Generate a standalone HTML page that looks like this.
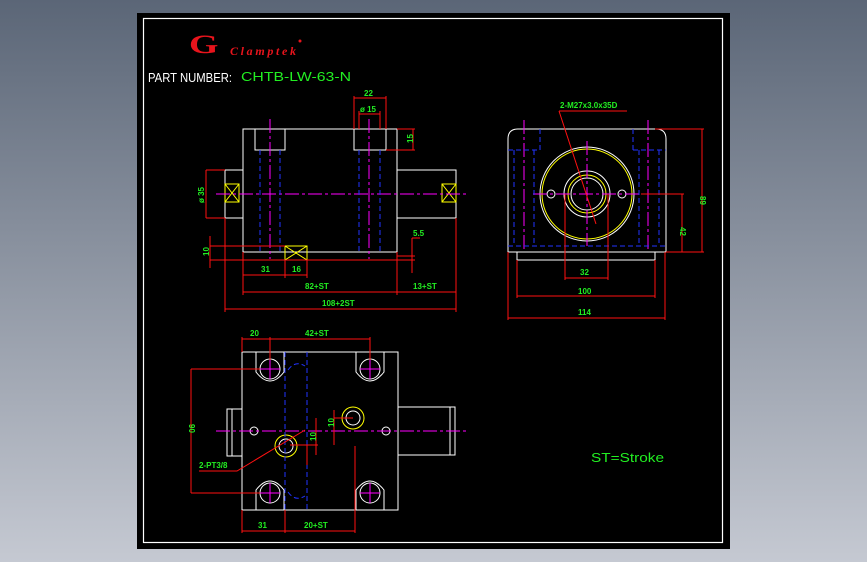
<!DOCTYPE html>
<html><head><meta charset="utf-8"><style>
html,body{margin:0;padding:0;width:867px;height:562px;overflow:hidden;background:linear-gradient(#5b6677,#c5c9d2);}
svg{position:absolute;left:0;top:0}
text{font-family:"Liberation Sans",sans-serif;}
.g{fill:#22ee22;font-size:8px;font-weight:bold;}
</style></head><body>
<svg width="867" height="562" viewBox="0 0 867 562">
<rect x="137" y="13" width="593" height="536" fill="#000"/>
<rect x="143.5" y="18.5" width="579" height="524" fill="none" stroke="#fff" stroke-width="1.2"/>
<!-- logo -->
<text x="0" y="0" fill="#e8141c" style="font-family:'Liberation Serif',serif;font-weight:bold;font-size:28px" transform="translate(189,53) scale(1.35,0.95)">G</text>
<text x="230" y="55" fill="#e8141c" style="font-family:'Liberation Serif',serif;font-style:italic;font-weight:bold;font-size:12px" textLength="66" lengthAdjust="spacing">Clamptek</text>
<circle cx="300" cy="41" r="1.5" fill="#e8141c"/>
<text x="148" y="82" fill="#fff" font-size="13" textLength="84" lengthAdjust="spacingAndGlyphs">PART NUMBER:</text>
<text x="241" y="81" fill="#22ee22" font-size="13" textLength="110" lengthAdjust="spacingAndGlyphs">CHTB-LW-63-N</text>
<text x="591" y="462" fill="#22ee22" font-size="13" textLength="73" lengthAdjust="spacingAndGlyphs">ST=Stroke</text>

<g fill="none" stroke-width="1">
<!-- FRONT VIEW -->
<g stroke="#fff">
<rect x="243" y="129" width="154" height="123"/>
<rect x="255" y="129" width="30" height="21"/>
<rect x="354" y="129" width="32" height="21"/>
<rect x="225" y="170" width="18" height="48"/>
<rect x="397" y="170" width="59" height="48"/>
</g>
<g stroke="#ffff00">
<rect x="225" y="184" width="14" height="18"/><path d="M225 184L239 202M239 184L225 202"/>
<rect x="442" y="184" width="14" height="18"/><path d="M442 184L456 202M456 184L442 202"/>
<rect x="285" y="246" width="22" height="14"/><path d="M285 246L307 260M307 246L285 260"/>
</g>
<g stroke="#ff00ff" stroke-dasharray="14,3,3,3">
<path d="M216 194H467M270 119V259M369 119V259"/>
</g>
<g stroke="#2233ff" stroke-dasharray="5,3">
<path d="M260 150V252M280 150V252M359 150V252M380 150V252"/>
</g>
<g stroke="#ff1111">
<path d="M354 98H386M354 96V129M386 96V129M359 114H380M359 111V129M380 111V129"/>
<path d="M386 150H415M397 129H415M413 129V150"/>
<path d="M206 170V218M206 170H225M206 218H225"/>
<path d="M210 236V268M210 246H285M210 260H415M397 256H415M412 238V273M412 238H420"/>
<path d="M243 275H307M243 252V295M285 260V278M307 260V278"/>
<path d="M243 292H456M397 252V295M456 218V312M225 218V312M225 309H456"/>
</g>
<text class="g" x="364" y="96">22</text>
<text class="g" x="360" y="112">ø 15</text>
<text class="g" transform="translate(413,143) rotate(-90)">15</text>
<text class="g" transform="translate(204,203) rotate(-90)">ø 35</text>
<text class="g" transform="translate(209,256) rotate(-90)">10</text>
<text class="g" x="413" y="236">5.5</text>
<text class="g" x="261" y="272">31</text>
<text class="g" x="292" y="272">16</text>
<text class="g" x="305" y="289">82+ST</text>
<text class="g" x="413" y="289">13+ST</text>
<text class="g" x="322" y="306">108+2ST</text>

<!-- SIDE VIEW -->
<g stroke="#fff">
<path d="M508 252V139Q508 129 518 129H656Q666 129 666 139V252Z"/>
<rect x="517" y="252" width="138" height="8"/>
<circle cx="587" cy="194" r="47"/>
<circle cx="587" cy="194" r="23"/>
<circle cx="587" cy="194" r="16"/>
<circle cx="551" cy="194" r="4"/><circle cx="622" cy="194" r="4"/>
</g>
<g stroke="#ffff00"><circle cx="587" cy="194" r="45"/><circle cx="587" cy="194" r="19"/></g>
<g stroke="#ff00ff" stroke-dasharray="14,3,3,3"><path d="M524 120V250M648 120V250M587 141V246M533 194H639"/></g>
<g stroke="#2233ff" stroke-dasharray="5,3"><path d="M508 150H540M633 150H666M508 246H666M514 150V246M534 150V246M639 150V246M659 150V246M540 129V150M633 129V150"/></g>
<g stroke="#ff1111">
<path d="M559 111H627M559 111L596 224"/>
<path d="M655 129H704M702 129V252M666 252H704M641 194H684M682 194V252"/>
<path d="M565 194V280M608 194V280M565 278H608M517 260V298M655 260V298M517 296H655M508 252V320M665 252V320M508 318H665"/>
</g>
<text class="g" x="560" y="108" font-size="7">2-M27x3.0x35D</text>
<text class="g" transform="translate(700,196) rotate(90)">89</text>
<text class="g" transform="translate(680,227) rotate(90)">42</text>
<text class="g" x="580" y="275">32</text>
<text class="g" x="578" y="294">100</text>
<text class="g" x="578" y="315">114</text>

<!-- BOTTOM VIEW -->
<g stroke="#fff">
<rect x="242" y="352" width="156" height="158"/>
<path d="M256 352V372Q270 390 284 372V352M356 352V372Q370 390 384 372V352M256 510V490Q270 472 284 490V510M356 510V490Q370 472 384 490V510"/>
<circle cx="270" cy="369" r="10"/><circle cx="370" cy="369" r="10"/><circle cx="270" cy="493" r="10"/><circle cx="370" cy="493" r="10"/>
<path d="M242 409H227V456H242M398 407H455V455H398M232 409V456M450 407V455"/>
<circle cx="254" cy="431" r="4"/><circle cx="386" cy="431" r="4"/>
<circle cx="286" cy="446" r="7"/><circle cx="353" cy="418" r="7"/>
</g>
<g stroke="#ffff00"><circle cx="286" cy="446" r="11"/><circle cx="353" cy="418" r="11"/></g>
<g stroke="#ff00ff" stroke-dasharray="14,3,3,3"><path d="M216 431H467"/></g>
<g stroke="#ff00ff"><path d="M260 369H280M270 359V379M360 369H380M370 359V379M260 493H280M270 483V503M360 493H380M370 483V503"/></g>
<g stroke="#2233ff" stroke-dasharray="5,3"><path d="M285 352V510M307 352V510M288 370Q295 360 305 366M288 492Q295 502 305 496"/></g>
<g stroke="#ff1111">
<path d="M242 339H370M242 337V352M270 337V360M370 337V360"/>
<path d="M191 369V493M191 369H260M191 493H260"/>
<path d="M334 410V445M334 418H353M307 445V465M290 445H318M316 418V455"/>
<path d="M199 471H237L305 430"/>
<path d="M242 531H355M242 510V533M285 510V533M355 446V533"/>
</g>
<text class="g" x="250" y="336">20</text>
<text class="g" x="305" y="336">42+ST</text>
<text class="g" transform="translate(189,424) rotate(90)">90</text>
<text class="g" transform="translate(334,427) rotate(-90)">10</text>
<text class="g" transform="translate(316,441) rotate(-90)">10</text>
<text class="g" x="199" y="468">2-PT3/8</text>
<text class="g" x="258" y="528">31</text>
<text class="g" x="304" y="528">20+ST</text>
</g>
</svg>
</body></html>
